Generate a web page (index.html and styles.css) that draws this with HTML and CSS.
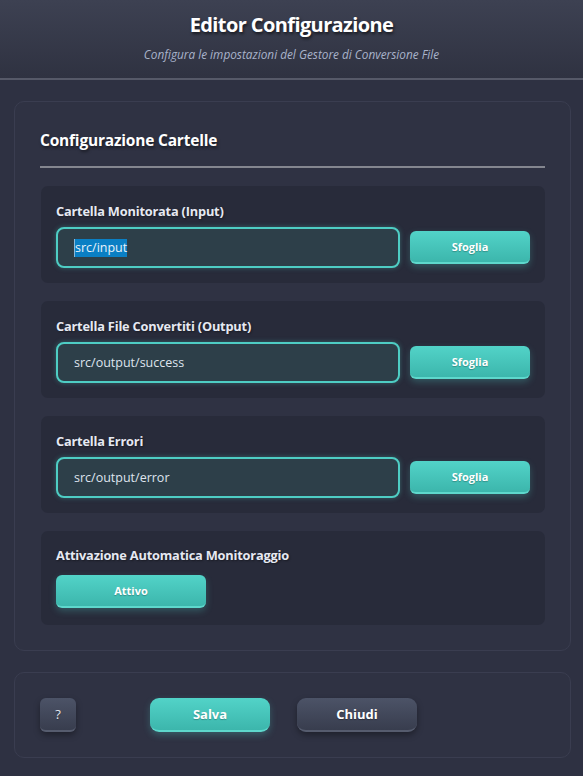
FILE: index.html
```html
<!DOCTYPE html>
<html lang="it">
<head>
<meta charset="utf-8">
<title>Editor Configurazione</title>
<link rel="stylesheet" href="styles.css">
</head>
<body>
<header class="header">
  <h1 class="title">Editor Configurazione</h1>
  <p class="subtitle">Configura le impostazioni del Gestore di Conversione File</p>
</header>
<main class="main">
  <section class="card">
    <h2 class="card-title">Configurazione Cartelle</h2>
    <div class="group">
      <div class="label">Cartella Monitorata (Input)</div>
      <div class="row">
        <div class="field"><span class="caret"></span><span class="sel">src/input</span></div>
        <button class="btn btn-teal btn-browse">Sfoglia</button>
      </div>
    </div>
    <div class="group">
      <div class="label">Cartella File Convertiti (Output)</div>
      <div class="row">
        <div class="field">src/output/success</div>
        <button class="btn btn-teal btn-browse">Sfoglia</button>
      </div>
    </div>
    <div class="group">
      <div class="label">Cartella Errori</div>
      <div class="row">
        <div class="field">src/output/error</div>
        <button class="btn btn-teal btn-browse">Sfoglia</button>
      </div>
    </div>
    <div class="group group-last">
      <div class="label label-toggle">Attivazione Automatica Monitoraggio</div>
      <button class="btn btn-teal btn-toggle">Attivo</button>
    </div>
  </section>
  <section class="footer">
    <button class="btn btn-gray btn-help">?</button>
    <button class="btn btn-teal btn-save">Salva</button>
    <button class="btn btn-gray btn-close">Chiudi</button>
  </section>
</main>
</body>
</html>
```
FILE: styles.css
```css
* { box-sizing: border-box; }
html, body { margin: 0; padding: 0; }
body {
  background: #2e3142;
  font-family: "Open Sans", "Noto Sans", sans-serif;
  color: #e8ebf2;
  width: 583px;
  height: 776px;
  overflow: hidden;
}
.header {
  height: 80px;
  background: linear-gradient(#3d4152, #2f3241);
  border-bottom: 2px solid #565968;
  text-align: center;
  padding-top: 11px;
}
.title {
  margin: 0;
  font-size: 20px;
  line-height: 28px;
  font-weight: 700;
  color: #ffffff;
  letter-spacing: -0.6px;
  text-shadow: 1px 2px 3px rgba(0,0,0,0.6);
}
.subtitle {
  margin: 8px 0 0;
  font-size: 11.8px;
  line-height: 14px;
  font-style: italic;
  color: #a9b3ca;
}
.main {
  padding: 21px 12px 0 14px;
}
.card {
  background: #2f3243;
  border: 1px solid #3a3d50;
  border-radius: 10px;
  padding: 27px 25px 25px 25px;
}
.card-title {
  margin: 0;
  font-size: 15.5px;
  line-height: 22px;
  font-weight: 700;
  color: #ffffff;
  letter-spacing: -0.2px;
  padding-bottom: 15px;
  border-bottom: 2px solid #84868f;
  text-shadow: 1px 2px 3px rgba(0,0,0,0.5);
}
.group {
  background: #282b3a;
  border-radius: 7px;
  padding: 16px 15px 15px 15px;
  margin: 18px 0 0 1px;
}
.group-last { padding-top: 15px; padding-bottom: 17px; }
.label {
  font-size: 12.8px;
  line-height: 18px;
  font-weight: 700;
  color: #e6e9f2;
  letter-spacing: -0.2px;
  margin-bottom: 7px;
  text-shadow: 1px 1px 2px rgba(0,0,0,0.4);
}
.label-toggle { margin-bottom: 11px; }
.row {
  display: flex;
  align-items: center;
  gap: 10px;
}
.field {
  flex: 1;
  height: 41px;
  border: 2px solid #4ecdc4;
  border-radius: 8px;
  background: #2d3f49;
  box-shadow: 0 0 5px rgba(78,205,196,0.35);
  padding: 0 16px;
  display: flex;
  align-items: center;
  font-size: 12.5px;
  color: #dfe4ee;
}
.caret {
  width: 1px;
  height: 18px;
  background: #8ab8d8;
}
.sel {
  background: #0a7fc4;
  color: #e8f2fb;
  line-height: 18px;
}
.btn {
  font-family: inherit;
  font-weight: 700;
  color: #ffffff;
  cursor: pointer;
  border: none;
  padding: 0;
}
.btn-teal {
  background: linear-gradient(#52d3c8, #3cb6ac);
  border-bottom: 2px solid #5ed8cc;
  box-shadow: 0 3px 7px rgba(78,205,196,0.28);
  text-shadow: 0 1px 1px rgba(0,0,0,0.25);
}
.btn-gray {
  background: linear-gradient(#4c5367, #383d4e);
  border-bottom: 2px solid #565c6e;
  box-shadow: 0 3px 6px rgba(0,0,0,0.35);
  text-shadow: 0 1px 1px rgba(0,0,0,0.3);
}
.btn-browse {
  width: 120px;
  height: 33px;
  border-radius: 6px;
  font-size: 11px;
}
.btn-toggle {
  width: 150px;
  height: 33px;
  border-radius: 6px;
  font-size: 11px;
}
.footer {
  margin-top: 21px;
  height: 86px;
  background: #2f3243;
  border: 1px solid #3a3d50;
  border-radius: 10px;
  padding: 0 25px;
  display: flex;
  align-items: center;
}
.btn-help {
  width: 36px;
  height: 34px;
  border-radius: 6px;
  font-size: 13px;
  font-weight: 400;
  color: #e4e7ee;
}
.btn-save {
  width: 120px;
  height: 34px;
  border-radius: 9px;
  font-size: 13px;
  margin-left: 74px;
}
.btn-close {
  width: 120px;
  height: 34px;
  border-radius: 9px;
  font-size: 13px;
  margin-left: 27px;
}
```
